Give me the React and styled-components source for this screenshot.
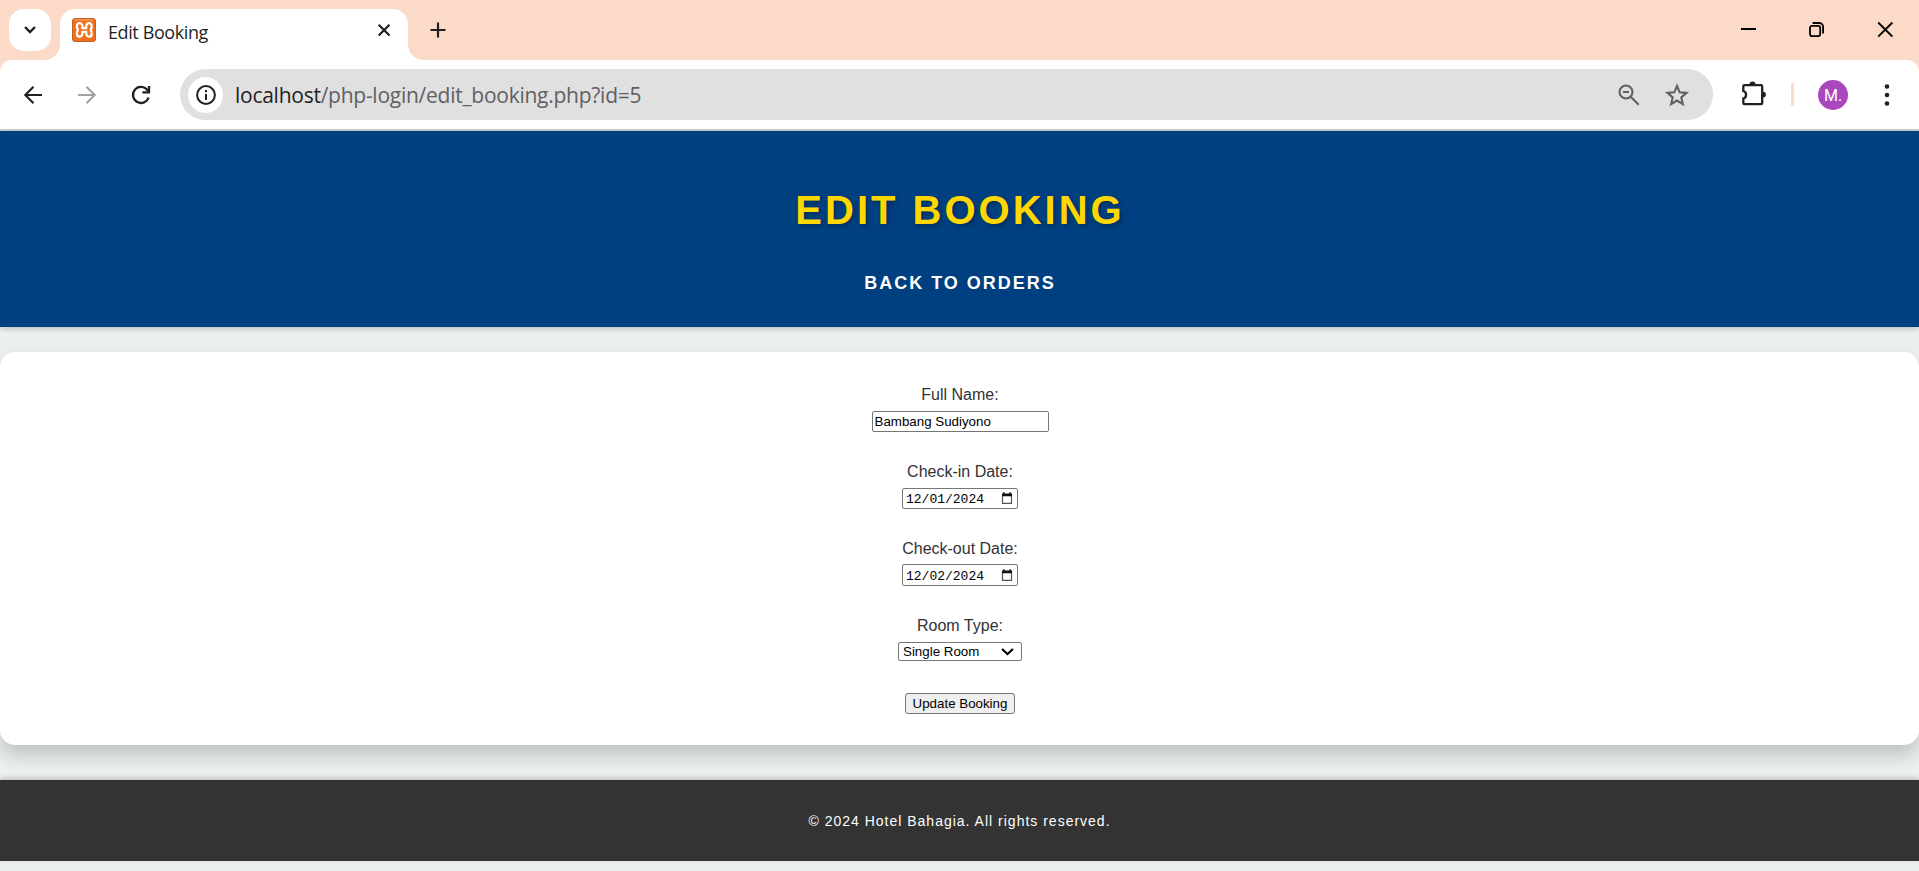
import React from "react";
import styled, { createGlobalStyle } from "styled-components";

const Global = createGlobalStyle`
  *, *::before, *::after { box-sizing: border-box; }
  body { margin: 0; background: #ecf0f1; font-family: "Liberation Sans", Arial, sans-serif; overflow: hidden; }
`;

const Window = styled.div`
  width: 1919px;
  height: 871px;
  display: flex;
  flex-direction: column;
  overflow: hidden;
`;

const TabStrip = styled.div`
  height: 60px;
  flex: none;
  display: flex;
  padding: 9px 26px 0 9px;
  background: #fcdac8;
`;

const TabSearch = styled.div`
  width: 42px;
  height: 42px;
  border-radius: 15px;
  background: #fff;
  display: grid;
  place-items: center;
`;

const Tab = styled.div`
  position: relative;
  width: 348px;
  height: 51px;
  margin-left: 9px;
  padding: 0 16px 9px 12px;
  display: flex;
  align-items: center;
  background: #fff;
  border-radius: 15px 15px 0 0;
  &::before, &::after {
    content: "";
    position: absolute;
    bottom: 0;
    width: 15px;
    height: 15px;
  }
  &::before { left: -15px; background: radial-gradient(circle at 0 0, transparent 14.5px, #fff 15px); }
  &::after { right: -15px; background: radial-gradient(circle at 100% 0, transparent 14.5px, #fff 15px); }
`;

const TabTitle = styled.span`
  flex: 1;
  margin: 3px 0 0 12px;
  font: 18px/24px "Open Sans", "Noto Sans", sans-serif;
  letter-spacing: -0.4px;
  color: #1f1f1f;
  white-space: nowrap;
`;

const NewTab = styled.div`
  width: 30px;
  height: 42px;
  margin-left: 15px;
  display: grid;
  place-items: center;
`;

const WindowControls = styled.div`
  margin-left: auto;
  height: 41px;
  display: flex;
  align-items: center;
  gap: 52px;
`;

const ToolbarBack = styled.div`
  flex: none;
  background: #fcdac8;
`;

const Toolbar = styled.div`
  height: 71px;
  display: flex;
  align-items: center;
  padding: 0 17px 0 6px;
  background: #fff;
  border-radius: 12px 12px 0 0;
  border-bottom: 2px solid #c8cccb;
`;

const NavButton = styled.div`
  width: 54px;
  height: 41px;
  display: grid;
  place-items: center;
  color: ${(p) => (p.$muted ? "#a2a2a2" : "#1f2023")};
`;

const AddressBar = styled.div`
  width: 1533px;
  height: 51px;
  margin-left: 12px;
  padding: 0 24px 0 8px;
  display: flex;
  align-items: center;
  border-radius: 26px;
  background: #e0e0e0;
  color: #5f6063;
`;

const SiteInfo = styled.div`
  width: 35px;
  height: 36px;
  border-radius: 50%;
  background: #fff;
  color: #1f2023;
  display: grid;
  place-items: center;
`;

const Url = styled.div`
  flex: 1;
  margin-left: 12px;
  font: 21px/30px "Open Sans", "Noto Sans", sans-serif;
  letter-spacing: -0.26px;
  white-space: nowrap;
  b { font-weight: 400; color: #1f1f1f; }
`;

const AddressActions = styled.div`
  display: flex;
  align-items: center;
  gap: 25px;
`;

const Extensions = styled.div`
  width: 26px;
  height: 27px;
  margin-left: 28px;
`;

const Divider = styled.div`
  width: 3px;
  height: 23px;
  margin-left: 24px;
  background: #fcdac8;
  border-radius: 1px;
`;

const Avatar = styled.div`
  width: 30px;
  height: 30px;
  margin-left: 24px;
  border-radius: 50%;
  background: #ab47bc;
  color: #fff;
  font: 16px/31px Roboto, sans-serif;
  text-align: center;
`;

const MenuDots = styled.div`
  width: 24px;
  height: 24px;
  margin-left: 27px;
`;

const Header = styled.header`
  height: 196px;
  flex: none;
  padding-left: 1px;
  display: flex;
  flex-direction: column;
  align-items: center;
  background: #004080;
  box-shadow: 0 2px 5px rgba(0, 0, 0, 0.2);
  text-transform: uppercase;
  font-weight: 700;
`;

const Title = styled.h1`
  margin: 56px 0 0;
  font-size: 40px;
  line-height: 46px;
  letter-spacing: 3px;
  color: #ffd700;
  text-shadow: 2px 2px 4px rgba(0, 0, 0, 0.3);
`;

const BackLink = styled.a`
  margin-top: 39px;
  font-size: 18px;
  line-height: 22px;
  letter-spacing: 2px;
  color: #fff;
`;

const Card = styled.form`
  height: 393px;
  flex: none;
  margin: 25px 0 35px;
  padding: 34px 0 0 1px;
  display: flex;
  flex-direction: column;
  align-items: center;
  background: #fff;
  border-radius: 15px;
  box-shadow: 0 10px 20px rgba(0, 0, 0, 0.2);
`;

const Field = styled.label`
  height: 77px;
  display: flex;
  flex-direction: column;
  align-items: center;
  gap: ${(p) => p.$gap || 7}px;
  font-size: 16px;
  line-height: 18px;
  color: #333;
`;

const TextInput = styled.input`
  width: 177px;
  height: 21px;
  padding: 1px 2px;
  border: 1px solid #767676;
  border-radius: 2px;
  font: 13.333px "Liberation Sans", Arial, sans-serif;
  color: #000;
  background: #fff;
  outline: none;
`;

const DateInput = styled.div`
  width: 116px;
  height: ${(p) => p.$height || 21}px;
  padding: 0 4px 0 3px;
  display: flex;
  align-items: center;
  justify-content: space-between;
  border: 1px solid #767676;
  border-radius: 2px;
  font: 13px/17px "Liberation Mono", monospace;
  color: #000;
`;

const DateText = styled.span`
  padding-top: 2px;
`;

const SelectBox = styled.div`
  width: 124px;
  height: 19px;
  padding: 0 7px 0 4px;
  display: flex;
  align-items: center;
  justify-content: space-between;
  border: 1px solid #767676;
  border-radius: 2px;
  font-size: 13.333px;
  line-height: 17px;
  color: #000;
`;

const Submit = styled.button`
  width: 110px;
  height: 21px;
  margin-top: -1px;
  padding: 0;
  border: 1px solid #767676;
  border-radius: 3px;
  background: #efefef;
  font: 13.333px "Liberation Sans", Arial, sans-serif;
  color: #000;
  white-space: nowrap;
`;

const Footer = styled.footer`
  height: 81px;
  flex: none;
  display: flex;
  align-items: center;
  justify-content: center;
  background: #333;
  color: #fff;
  font-size: 14px;
  letter-spacing: 1px;
  box-shadow: 0 -2px 5px rgba(0, 0, 0, 0.2);
`;

const Icon = styled.svg`
  display: block;
  flex: none;
  fill: none;
  stroke: currentColor;
  overflow: visible;
`;

const CalendarIcon = () => (
  <Icon width="12" height="13" viewBox="0 0 12 13">
    <path d="M1.500 3h9v8.400h-9z" stroke="#555" strokeWidth="1.2" />
    <path d="M1 1.500h10V4.300H1zM2.200 .3h1.500v2H2.200zM8.300 .3h1.500v2H8.300z" fill="#111" stroke="none" />
  </Icon>
);

const Favicon = () => (
  <Icon width="24" height="24" viewBox="0 0 24 24">
    <rect x=".5" y=".5" width="23" height="23" rx="2.5" fill="#f26f1b" stroke="#b9622a" />
    <path d="M2.500 1.900h19" stroke="#f5a878" />
    <path
      d="M10.300 10.200C10.900 7 9.600 5.200 7.600 5.200C4.900 5.200 3.900 8.500 5.900 12C3.900 15.500 4.900 18.700 7.600 18.700C9.600 18.700 10.900 17 10.300 13.900H14.300C13.700 17 15 18.700 17 18.700C19.700 18.700 20.700 15.500 18.700 12C20.700 8.500 19.700 5.200 17 5.200C15 5.200 13.700 7 14.300 10.200Z"
      stroke="#fff" strokeWidth="2.3" strokeLinejoin="round"
    />
  </Icon>
);

export default function App() {
  return (
    <Window>
      <Global />
      <TabStrip>
        <TabSearch>
          <Icon width="12" height="8" viewBox="0 0 12 8" color="#1f2023" strokeWidth="2.4">
            <path d="M1 1l5 5 5-5" />
          </Icon>
        </TabSearch>
        <Tab>
          <Favicon />
          <TabTitle>Edit Booking</TabTitle>
          <Icon width="16" height="12" viewBox="0 0 16 12" color="#1f2023" strokeWidth="2.2">
            <path d="M2.700.7l10.800 10.800M13.500.7L2.700 11.500" />
          </Icon>
        </Tab>
        <NewTab>
          <Icon width="16" height="16" viewBox="0 0 16 16" color="#1f2023" strokeWidth="2.2">
            <path d="M8 .5v15M.5 8h15" />
          </Icon>
        </NewTab>
        <WindowControls>
          <Icon width="16" height="15" viewBox="0 0 16 15" color="#000" strokeWidth="2">
            <path d="M0 7h15" />
          </Icon>
          <Icon width="16" height="15" viewBox="0 0 16 15" color="#000" strokeWidth="1.8">
            <rect x="1" y="3.900" width="10.2" height="10.2" rx="2" />
            <path d="M3.600 1h6.500a4 4 0 0 1 4 4v6.500" />
          </Icon>
          <Icon width="16" height="15" viewBox="0 0 16 15" color="#000" strokeWidth="1.9">
            <path d="M1.200.5l14.200 14.200M15.400.5L1.200 14.700" />
          </Icon>
        </WindowControls>
      </TabStrip>

      <ToolbarBack>
        <Toolbar>
          <NavButton>
            <Icon width="18" height="18" viewBox="0 0 18 18" strokeWidth="2.1">
              <path d="M18 9H1.500M9.500.8L1.300 9l8.200 8.200" />
            </Icon>
          </NavButton>
          <NavButton $muted>
            <Icon width="18" height="18" viewBox="0 0 18 18" strokeWidth="2.1">
              <path d="M0 9h16.500M8.500.8L16.700 9l-8.200 8.200" />
            </Icon>
          </NavButton>
          <NavButton>
            <Icon width="18" height="18" viewBox="0 0 18 18" strokeWidth="2.3">
              <path d="M16.600 11.500A8 8 0 1 1 14.700 3.300L17 5.900" />
              <path d="M17 0v6.300h-6.600" />
            </Icon>
          </NavButton>
          <AddressBar>
            <SiteInfo>
              <Icon width="20" height="20" viewBox="0 0 20 20" strokeWidth="2">
                <circle cx="10" cy="10" r="8.900" />
                <path d="M10 9v6M10 5v2.200" />
              </Icon>
            </SiteInfo>
            <Url>
              <b>localhost</b>/php-login/edit_booking.php?id=5
            </Url>
            <AddressActions>
              <Icon width="22" height="22" viewBox="0 0 22 22" strokeWidth="2.1">
                <circle cx="8" cy="8" r="6.500" />
                <path d="M12.700 12.700l8 8M5 8h6" />
              </Icon>
              <Icon width="24" height="24" viewBox="0 0 24 24" strokeWidth="2.1">
                <path d="M12 3l2.650 6.300 6.850.6-5.200 4.500 1.550 6.700L12 17.550 6.150 21.100 7.700 14.400 2.500 9.900l6.850-.6z" />
              </Icon>
            </AddressActions>
          </AddressBar>
          <Extensions>
            <Icon width="26" height="26" viewBox="0 0 26 26" color="#1f2023" strokeWidth="2.300">
              <path d="M3.500 4.200H20a1.200 1.200 0 0 1 1.200 1.200V22a1.200 1.200 0 0 1-1.200 1.200H3.500A1.200 1.200 0 0 1 2.300 22V17.500C6 16.500 6 11 2.300 10V5.400A1.200 1.200 0 0 1 3.500 4.200z" />
              <path d="M8.500 3.500a3 3 0 0 1 6 0zM22 10.700a2.900 2.900 0 0 1 0 5.800z" fill="currentColor" stroke="none" />
            </Icon>
          </Extensions>
          <Divider />
          <Avatar>M.</Avatar>
          <MenuDots>
            <Icon width="24" height="24" viewBox="0 0 24 24" color="#1f2023" strokeWidth="0">
              <g fill="currentColor">
                <circle cx="12" cy="3.500" r="2.300" />
                <circle cx="12" cy="12" r="2.300" />
                <circle cx="12" cy="20.500" r="2.300" />
              </g>
            </Icon>
          </MenuDots>
        </Toolbar>
      </ToolbarBack>

      <Header>
        <Title>Edit Booking</Title>
        <BackLink>Back to Orders</BackLink>
      </Header>

      <Card>
        <Field>
          Full Name:
          <TextInput type="text" defaultValue="Bambang Sudiyono" />
        </Field>
        <Field>
          Check-in Date:
          <DateInput>
            <DateText>12/01/2024</DateText>
            <CalendarIcon />
          </DateInput>
        </Field>
        <Field $gap={6}>
          Check-out Date:
          <DateInput $height={22}>
            <DateText>12/02/2024</DateText>
            <CalendarIcon />
          </DateInput>
        </Field>
        <Field>
          Room Type:
          <SelectBox>
            Single Room
            <Icon width="13" height="8" viewBox="0 0 13 8" strokeWidth="2.1">
              <path d="M1 1l5.500 5L12 1" />
            </Icon>
          </SelectBox>
        </Field>
        <Submit type="button">Update Booking</Submit>
      </Card>

      <Footer>© 2024 Hotel Bahagia. All rights reserved.</Footer>
    </Window>
  );
}
